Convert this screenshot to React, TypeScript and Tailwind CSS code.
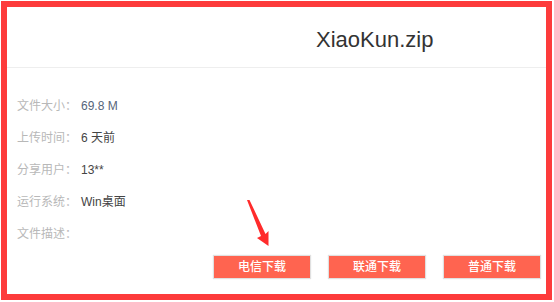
const rows = [
  { label: "文件大小：", value: "69.8 M", tone: "text-[#56657a]" },
  { label: "上传时间：", value: "6 天前", tone: "text-[#444]" },
  { label: "分享用户：", value: "13**", tone: "text-[#444]" },
  { label: "运行系统：", value: "Win桌面", tone: "text-[#444]" },
  { label: "文件描述：", value: "", tone: "text-[#444]" },
];

const buttons = ["电信下载", "联通下载", "普通下载"];

function Arrow() {
  return (
    <svg
      className="absolute left-0 top-0 pointer-events-none"
      width="554"
      height="302"
      viewBox="0 0 554 302"
    >
      <polygon
        points="247,200 249.5,200 265.5,234 268.5,231 268.5,246 257,238 261,236"
        fill="#ff2b2b"
      />
    </svg>
  );
}

export default function App() {
  return (
    <div
      className="relative w-[554px] h-[302px] bg-white overflow-hidden"
      style={{ fontFamily: '"Liberation Sans", Arial, "Noto Sans CJK SC", sans-serif' }}
    >
      <div className="ml-px mt-px w-[551px] h-[299px] border-[6px] border-[#fd3b3b] bg-white">
        <div className="h-[61px] border-b border-[#eeeeee] pt-[20px] pl-[309px]">
          <div className="text-[22px] leading-[26px] text-[#333]">XiaoKun.zip</div>
        </div>

        <div className="mt-[22px] pl-[10px]">
          {rows.map((r) => (
            <div key={r.label} className="flex items-center h-[32px] text-[12px]">
              <div className="w-[64px] text-[#b8b8b8]">{r.label}</div>
              <div className={r.tone}>{r.value}</div>
            </div>
          ))}
        </div>

        <div className="flex justify-end gap-[19px] pr-[6px] mt-[6px]">
          {buttons.map((b) => (
            <button
              key={b}
              className="w-[96px] h-[22px] bg-[#ff6450] text-white text-[12px] font-medium leading-[22px] shadow-[0_0_1px_1px_rgba(0,0,0,0.12)]"
            >
              {b}
            </button>
          ))}
        </div>
      </div>
      <Arrow />
    </div>
  );
}
